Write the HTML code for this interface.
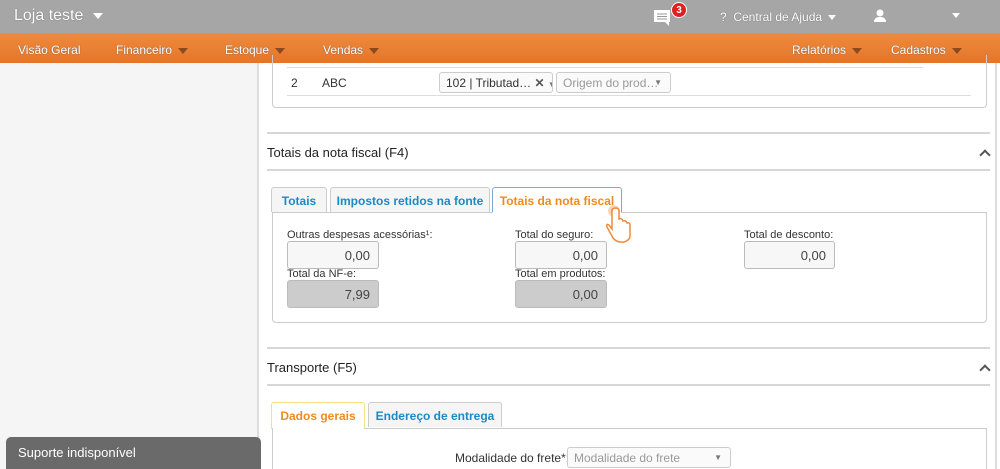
<!DOCTYPE html>
<html><head><meta charset="utf-8"><style>
*{box-sizing:border-box;margin:0;padding:0}
html,body{width:1000px;height:469px;overflow:hidden}
body{font-family:"Liberation Sans",Arial,sans-serif;background:#fff;position:relative;font-size:12px;color:#333}
.a{position:absolute;white-space:nowrap}
.top{left:0;top:0;width:1000px;height:33px;background:#a6a6a6}
.nav{left:0;top:33px;width:1000px;height:30px;background:linear-gradient(#f08a3c,#e2762a)}
.w{color:#fff;text-shadow:0 0 1px #555}
.tri{display:inline-block;width:0;height:0;border-left:5px solid transparent;border-right:5px solid transparent;border-top:6px solid #8a4a1e;margin-left:6px;vertical-align:middle}
.triw{display:inline-block;width:0;height:0;border-left:4px solid transparent;border-right:4px solid transparent;border-top:5px solid #fff;margin-left:6px;vertical-align:middle}
.side{left:0;top:63px;width:259px;height:406px;background:#f5f5f5;border-right:2px solid #ddd}
.hl{height:2px;background:#d6d6d6}
.lbl{font-size:11px;color:#333}
.inp{height:28px;border:1px solid #bbb;border-radius:3px;background:#f7f7f7;text-align:right;padding:6px 8px;font-size:13px;color:#444}
.dis{background:#ccc;border-color:#bbb}
.tab{height:25px;border:1px solid #ccc;border-bottom:none;border-radius:3px 3px 0 0;background:#f5f5f5;color:#1a8ac6;font-weight:bold;font-size:12px;padding:6px 0;text-align:center}
.sel{border:1px solid #ccc;border-radius:3px;background:#fafafa;font-size:12px;height:21px;padding:3px 6px;overflow:hidden}
.chev{width:8px;height:8px;border-left:2px solid #555;border-top:2px solid #555;transform:rotate(45deg)}
</style></head><body>
<div class="a top"></div>
<div class="a w" style="left:14px;top:7px;font-size:16px">Loja teste<span class="triw" style="margin-left:10px;border-left-width:5px;border-right-width:5px;border-top-width:6px"></span></div>
<svg class="a" style="left:653px;top:9px" width="20" height="18"><rect x="1" y="1" width="16" height="12" fill="#fff"/><path d="M12 13 L16 17 L16 13Z" fill="#fff"/><path d="M4 5h10M4 7.5h10M4 10h10" stroke="#999" stroke-width="1"/></svg>
<div class="a" style="left:671px;top:2px;width:16px;height:16px;border-radius:50%;background:#e02020;color:#fff;font-size:10px;text-align:center;line-height:15px;font-weight:bold;border:1px solid #fff">3</div>
<div class="a w" style="left:720px;top:10px;font-size:12px">?&nbsp; Central de Ajuda<span class="triw"></span></div>
<svg class="a" style="left:873px;top:9px" width="14" height="13"><circle cx="7" cy="4" r="3.5" fill="#fff"/><path d="M1 13 Q1 8 7 8 Q13 8 13 13Z" fill="#fff"/></svg>
<span class="a triw" style="left:946px;top:13px"></span>
<div class="a nav"></div>
<div class="a w" style="left:18px;top:43px">Visão Geral</div>
<div class="a w" style="left:116px;top:43px">Financeiro<span class="tri"></span></div>
<div class="a w" style="left:225px;top:43px">Estoque<span class="tri"></span></div>
<div class="a w" style="left:323px;top:43px">Vendas<span class="tri"></span></div>
<div class="a w" style="left:792px;top:43px">Relatórios<span class="tri"></span></div>
<div class="a w" style="left:891px;top:43px">Cadastros<span class="tri"></span></div>
<div class="a side"></div>
<div class="a" style="left:995px;top:63px;width:2px;height:406px;background:#ddd"></div>
<div class="a" style="left:272px;top:55px;width:715px;height:53px;border:1px solid #ccc;border-top:none;border-radius:0 0 4px 4px"></div>
<div class="a" style="left:287px;top:67px;width:636px;height:1px;background:#ddd"></div>
<div class="a" style="left:287px;top:95px;width:684px;height:1px;background:#ddd"></div>
<div class="a" style="left:291px;top:76px;font-size:12px">2</div>
<div class="a" style="left:322px;top:76px;font-size:12px">ABC</div>
<div class="a sel" style="left:439px;top:72px;width:114px;color:#333">102 | Tributad… <span style="color:#555;font-weight:bold">✕</span> <span style="font-size:8px;color:#777">▼</span></div>
<div class="a sel" style="left:556px;top:72px;width:115px;color:#999">Origem do prod…<span style="font-size:8px;color:#777;position:absolute;right:8px;top:5px">▼</span></div>
<div class="a hl" style="left:267px;top:132px;width:723px"></div>
<div class="a" style="left:267px;top:145px;font-size:13px;color:#222">Totais da nota fiscal (F4)</div>
<div class="a chev" style="left:981px;top:151px"></div>
<div class="a hl" style="left:267px;top:169px;width:723px"></div>
<div class="a tab" style="left:271px;top:187px;width:56px">Totais</div>
<div class="a tab" style="left:330px;top:187px;width:160px">Impostos retidos na fonte</div>
<div class="a tab" style="left:492px;top:187px;width:130px;background:#fff;color:#f08a1e;border-color:#7fa6d8;height:26px">Totais da nota fiscal</div>
<div class="a" style="left:272px;top:212px;width:715px;height:111px;border:1px solid #ccc;border-radius:0 0 4px 4px"></div>
<div class="a" style="left:493px;top:211px;width:128px;height:3px;background:#fff"></div>
<div class="a lbl" style="left:287px;top:229px">Outras despesas acessórias¹:</div>
<div class="a inp" style="left:287px;top:241px;width:92px">0,00</div>
<div class="a lbl" style="left:287px;top:268px">Total da NF-e:</div>
<div class="a inp dis" style="left:287px;top:280px;width:92px">7,99</div>
<div class="a lbl" style="left:515px;top:229px">Total do seguro:</div>
<div class="a inp" style="left:515px;top:241px;width:92px">0,00</div>
<div class="a lbl" style="left:515px;top:268px">Total em produtos:</div>
<div class="a inp dis" style="left:515px;top:280px;width:92px">0,00</div>
<div class="a lbl" style="left:744px;top:229px">Total de desconto:</div>
<div class="a inp" style="left:744px;top:241px;width:91px">0,00</div>
<svg class="a" style="left:600px;top:203px" width="34" height="42"><circle cx="14" cy="8" r="6" fill="#f8b98a" opacity=".6"/><circle cx="14" cy="8" r="3" fill="#f08a3c"/><path d="M12 8 V26 L9 22 Q6 20 7 24 L13 35 Q17 40 24 39 Q31 37 30 30 V22 Q30 19 27 20 Q26 17 23 18 Q22 15 19 16 V8 Q19 5 15.5 5 Q12 5 12 8Z" fill="#fff" stroke="#f08a3c" stroke-width="1.5"/></svg>
<div class="a hl" style="left:267px;top:347px;width:723px"></div>
<div class="a" style="left:267px;top:360px;font-size:13px;color:#222">Transporte (F5)</div>
<div class="a chev" style="left:981px;top:366px"></div>
<div class="a hl" style="left:267px;top:384px;width:723px"></div>
<div class="a tab" style="left:271px;top:402px;width:94px;background:#fff;color:#f08a1e;border-color:#f3e08a;height:27px">Dados gerais</div>
<div class="a tab" style="left:368px;top:402px;width:134px">Endereço de entrega</div>
<div class="a" style="left:272px;top:428px;width:715px;height:60px;border:1px solid #ccc"></div>
<div class="a" style="left:273px;top:427px;width:91px;height:3px;background:#fff"></div>
<div class="a" style="left:455px;top:451px;font-size:12px">Modalidade do frete*:</div>
<div class="a sel" style="left:567px;top:447px;width:164px;color:#999">Modalidade do frete<span style="position:absolute;right:8px;top:5px;font-size:8px;color:#777">▼</span></div>
<div class="a" style="left:6px;top:437px;width:255px;height:35px;background:#6a6a6a;border-radius:5px 5px 0 0;color:#fff;font-size:13px;padding:8px 12px">Suporte indisponível</div>
</body></html>
